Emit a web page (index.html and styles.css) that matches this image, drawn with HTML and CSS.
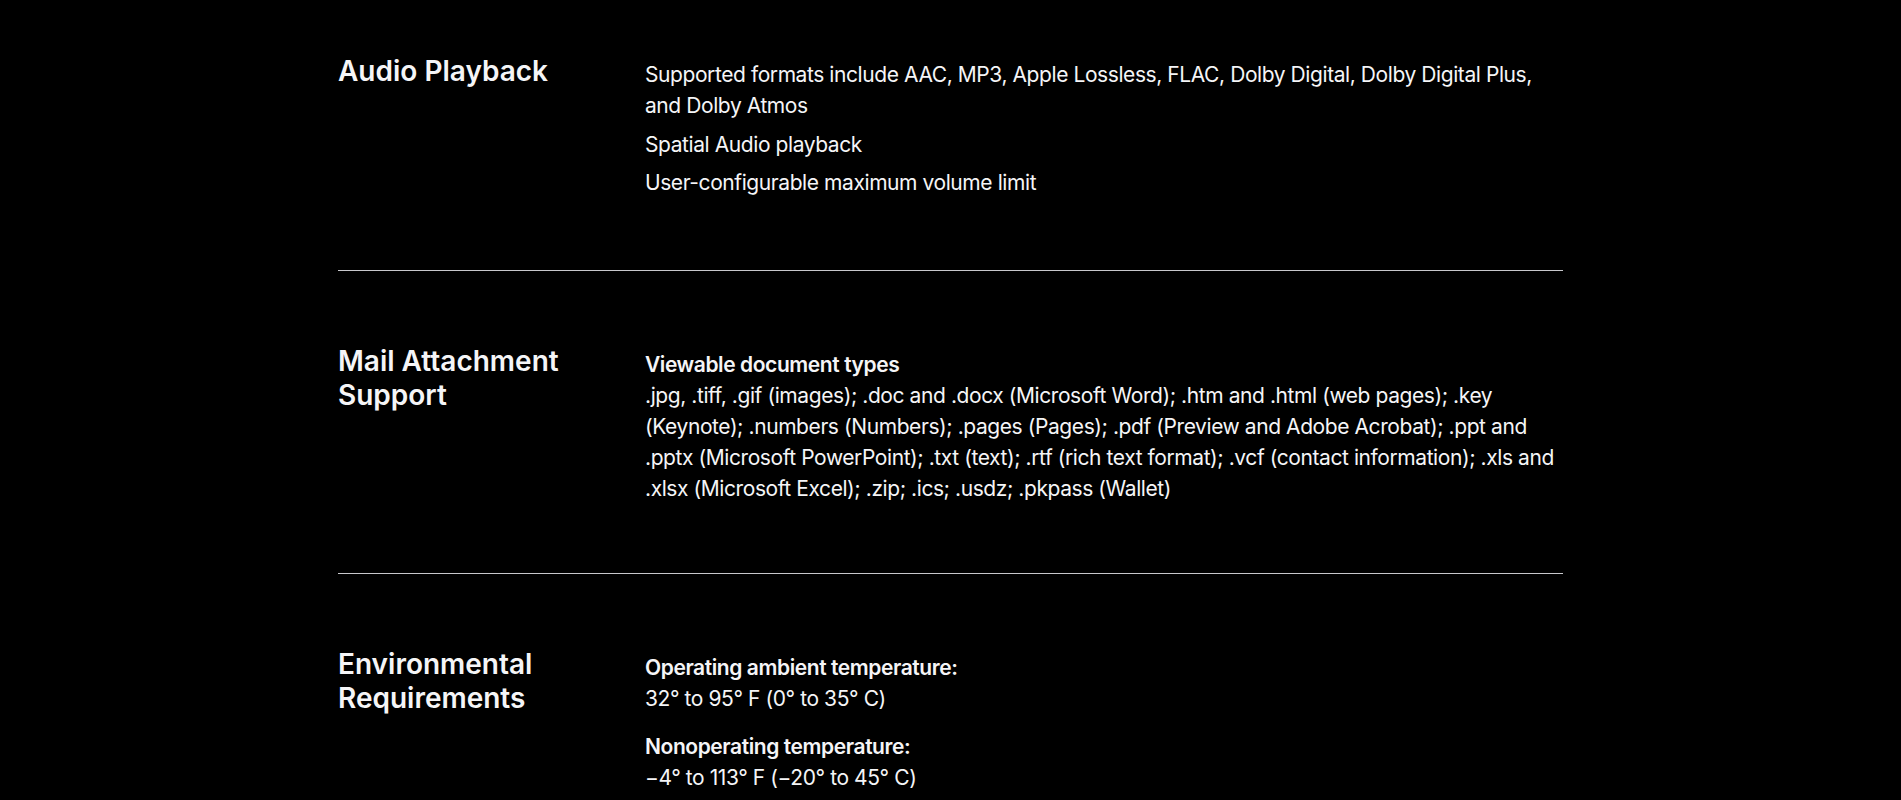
FILE: index.html
```html
<!DOCTYPE html>
<html lang="en">
<head>
<meta charset="utf-8">
<title>Tech Specs</title>
<link rel="stylesheet" href="styles.css">
</head>
<body>
<main class="specs">
  <section class="row row-first">
    <h2 class="row-title">Audio Playback</h2>
    <div class="row-body">
      <p class="item">Supported formats include AAC, MP3, Apple Lossless, FLAC, Dolby Digital, Dolby Digital Plus, and Dolby Atmos</p>
      <p class="item">Spatial Audio playback</p>
      <p class="item">User-configurable maximum volume limit</p>
    </div>
  </section>
  <section class="row">
    <h2 class="row-title">Mail Attachment Support</h2>
    <div class="row-body">
      <p class="group"><strong class="label">Viewable document types</strong><br>.jpg, .tiff, .gif (images); .doc and .docx (Microsoft Word); .htm and .html (web pages); .key (Keynote); .numbers (Numbers); .pages (Pages); .pdf (Preview and Adobe Acrobat); .ppt and .pptx (Microsoft PowerPoint); .txt (text); .rtf (rich text format); .vcf (contact information); .xls and .xlsx (Microsoft Excel); .zip; .ics; .usdz; .pkpass (Wallet)</p>
    </div>
  </section>
  <section class="row">
    <h2 class="row-title">Environmental Requirements</h2>
    <div class="row-body">
      <p class="group"><strong class="label">Operating ambient temperature:</strong><br>32° to 95° F (0° to 35° C)</p>
      <p class="group"><strong class="label">Nonoperating temperature:</strong><br>−4° to 113° F (−20° to 45° C)</p>
    </div>
  </section>
</main>
</body>
</html>
```

FILE: styles.css
```css
html, body {
  margin: 0;
  padding: 0;
  background: #000;
}

body {
  color: #f5f5f7;
  font-family: Inter, "Noto Sans", "Liberation Sans", sans-serif;
  -webkit-font-smoothing: antialiased;
}

.specs {
  width: 1225px;
  margin: 0 auto;
}

.row {
  display: grid;
  grid-template-columns: 307px 1fr;
  padding: 73px 0 69px;
  border-bottom: 1px solid #c8c8cc;
}

.row-first {
  padding-top: 54px;
  padding-bottom: 72px;
}

.row-title {
  margin: 0;
  padding-right: 40px;
  font-size: 28px;
  line-height: 34px;
  font-weight: 600;
  letter-spacing: 0;
}

.row-body {
  padding-top: 5px;
  font-size: 21px;
  line-height: 31px;
  font-weight: 400;
  letter-spacing: -0.02em;
}

.item {
  margin: 0 0 7.5px;
}

.item:last-child {
  margin-bottom: 0;
}

.group {
  margin: 0 0 17px;
}

.group:last-child {
  margin-bottom: 0;
}

.label {
  font-weight: 600;
}
```
